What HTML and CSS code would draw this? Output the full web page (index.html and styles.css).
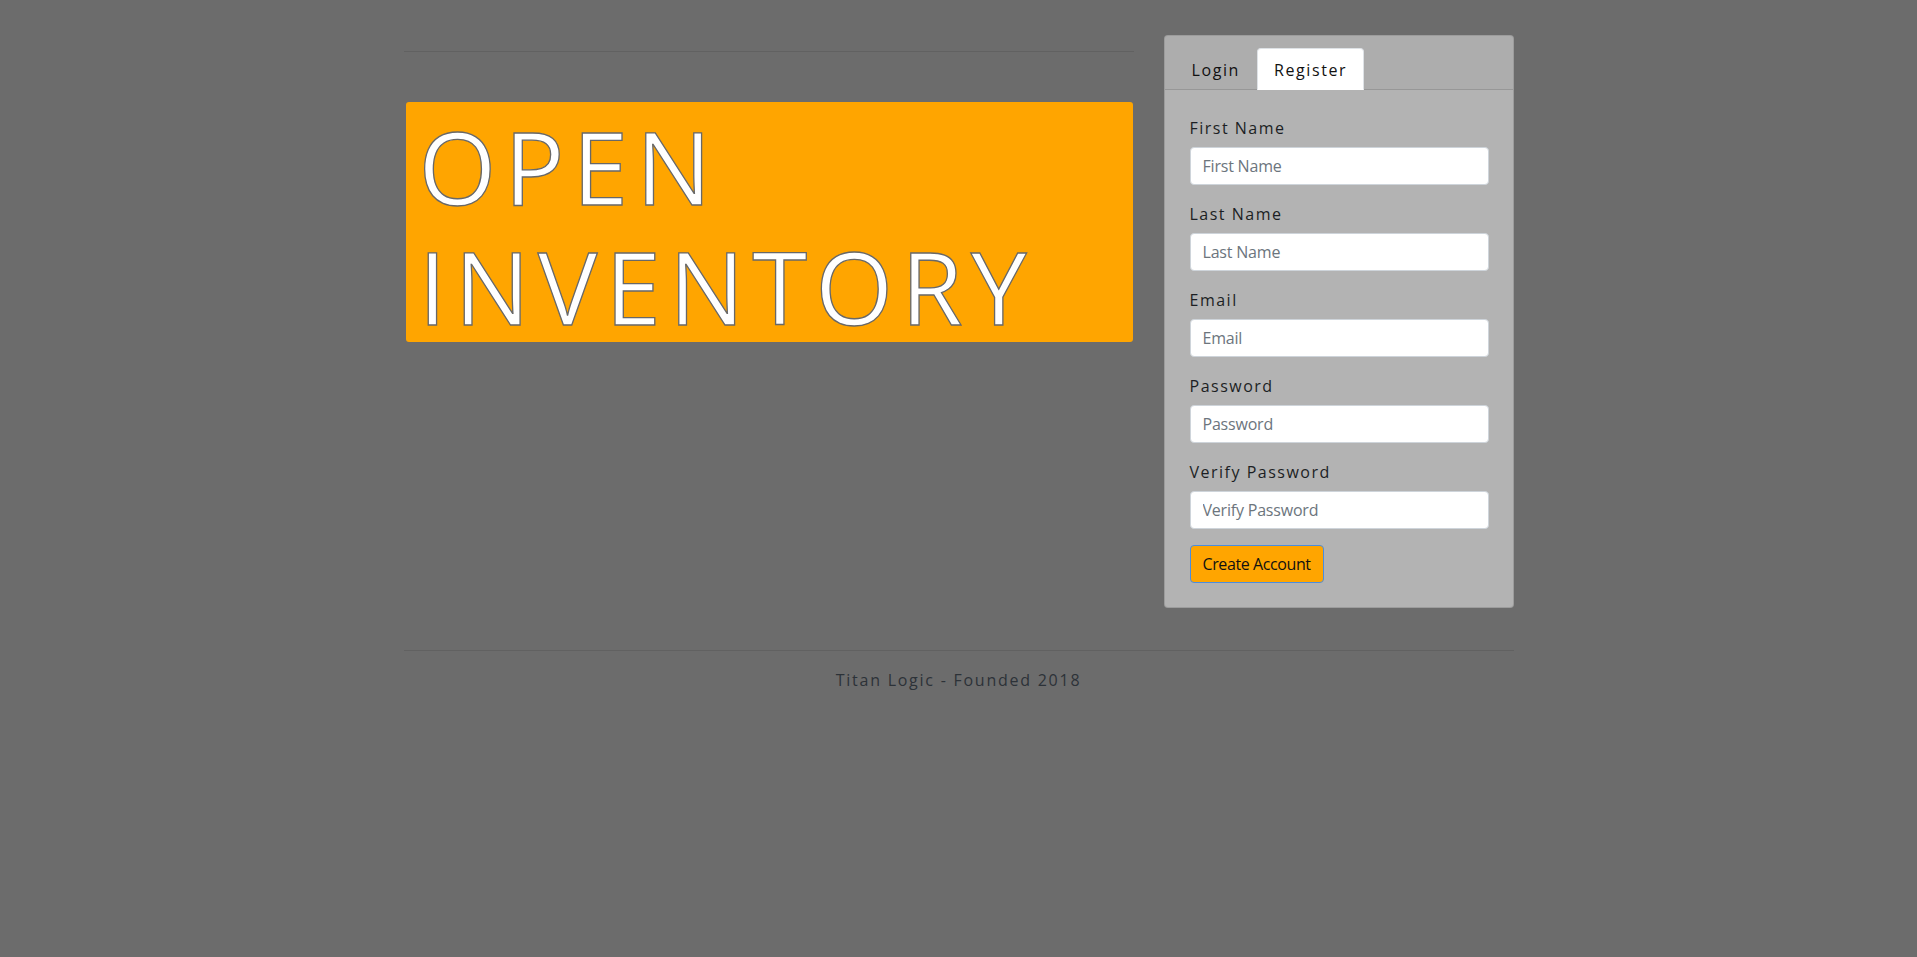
FILE: index.html
```html
<!DOCTYPE html>
<html lang="en">
<head>
<meta charset="utf-8">
<title>Open Inventory</title>
<link rel="stylesheet" href="styles.css">
</head>
<body>
<div class="container">
  <div class="row">
    <div class="col-main">
      <hr class="rule">
      <div class="banner">
        <h1 class="title">OPEN INVENTORY</h1>
      </div>
    </div>
    <div class="col-side">
      <div class="card">
        <div class="card-header">
          <ul class="tabs">
            <li class="tab">Login</li>
            <li class="tab tab-active">Register</li>
          </ul>
        </div>
        <form class="card-body">
          <div class="form-group">
            <label class="label" for="fn">First Name</label>
            <input class="input" id="fn" type="text" placeholder="First Name">
          </div>
          <div class="form-group">
            <label class="label" for="ln">Last Name</label>
            <input class="input" id="ln" type="text" placeholder="Last Name">
          </div>
          <div class="form-group">
            <label class="label" for="em">Email</label>
            <input class="input" id="em" type="email" placeholder="Email">
          </div>
          <div class="form-group">
            <label class="label" for="pw">Password</label>
            <input class="input" id="pw" type="password" placeholder="Password">
          </div>
          <div class="form-group">
            <label class="label" for="vpw">Verify Password</label>
            <input class="input" id="vpw" type="password" placeholder="Verify Password">
          </div>
          <button class="btn" type="button">Create Account</button>
        </form>
      </div>
    </div>
  </div>
  <footer class="footer">
    <hr class="rule footer-rule">
    <p class="footer-text">Titan Logic - Founded 2018</p>
  </footer>
</div>
</body>
</html>
```
FILE: styles.css
```css
* { box-sizing: border-box; }

html, body {
  margin: 0;
  padding: 0;
}

body {
  background: #6c6c6c;
  font-family: "Open Sans", "Noto Sans", sans-serif;
  font-size: 16px;
  line-height: 24px;
  color: #212529;
}

.container {
  width: 1110px;
  margin: 0 auto;
  padding-top: 35px;
}

.row {
  display: flex;
  gap: 30px;
  align-items: flex-start;
}

.col-main {
  width: 730px;
  display: flex;
  flex-direction: column;
}

.col-side {
  width: 350px;
}

.rule {
  border: 0;
  border-top: 1px solid rgba(0, 0, 0, 0.1);
  height: 0;
  margin: 16px 0 0 0;
}

.banner {
  margin: 50px 0 0 2px;
  width: 727px;
  height: 240px;
  background: #ffa500;
  border-radius: 3px;
  padding: 4px 13px 0 13px;
}

.title {
  margin: 0;
  font-family: "Open Sans", "Noto Sans", sans-serif;
  font-size: 100px;
  line-height: 120px;
  font-weight: 400;
  letter-spacing: 8px;
  color: #ffffff;
  -webkit-text-stroke: 1.3px #686868;
}

.card {
  background: #b3b3b3;
  border: 1px solid rgba(0, 0, 0, 0.125);
  border-radius: 4px;
  overflow: hidden;
}

.card-header {
  background: rgba(0, 0, 0, 0.03);
  border-bottom: 1px solid rgba(0, 0, 0, 0.125);
  padding: 12px 20px 0 20px;
}

.tabs {
  list-style: none;
  display: flex;
  margin: 0 -10px -1px -10px;
  padding: 0;
}

.tab {
  padding: 9px 16px 7px 16px;
  border: 1px solid transparent;
  border-radius: 4px 4px 0 0;
  letter-spacing: 1.6px;
  color: #111;
}

.tab-active {
  background: #ffffff;
  border-color: #dee2e6 #dee2e6 #ffffff;
}

.card-body {
  padding: 25px 24px 24px 25px;
  margin: 0;
}

.form-group {
  margin-bottom: 16px;
}

.label {
  display: block;
  margin-bottom: 8px;
  padding-top: 1px;
  height: 24px;
  letter-spacing: 1.5px;
  color: #1c1f24;
}

.input {
  display: block;
  width: 100%;
  height: 38px;
  padding: 6px 12px;
  font-family: "Open Sans", "Noto Sans", sans-serif;
  font-size: 16px;
  line-height: 24px;
  letter-spacing: -0.2px;
  color: #495057;
  background: #ffffff;
  border: 1px solid #ced4da;
  border-radius: 4px;
}

.input::placeholder {
  color: #6c757d;
}

.btn {
  display: inline-block;
  height: 38px;
  padding: 6px 12px;
  font-family: "Open Sans", "Noto Sans", sans-serif;
  font-size: 16px;
  line-height: 24px;
  letter-spacing: -0.4px;
  color: #111;
  background: #ffa500;
  border: 1px solid #4a8de0;
  border-radius: 4px;
}

.footer {
  padding-top: 26px;
}

.footer-rule {
  margin: 16px 0 0 0;
}

.footer-text {
  margin: 17px 0 0 0;
  text-align: center;
  letter-spacing: 1.75px;
  color: #2c3238;
}
```
